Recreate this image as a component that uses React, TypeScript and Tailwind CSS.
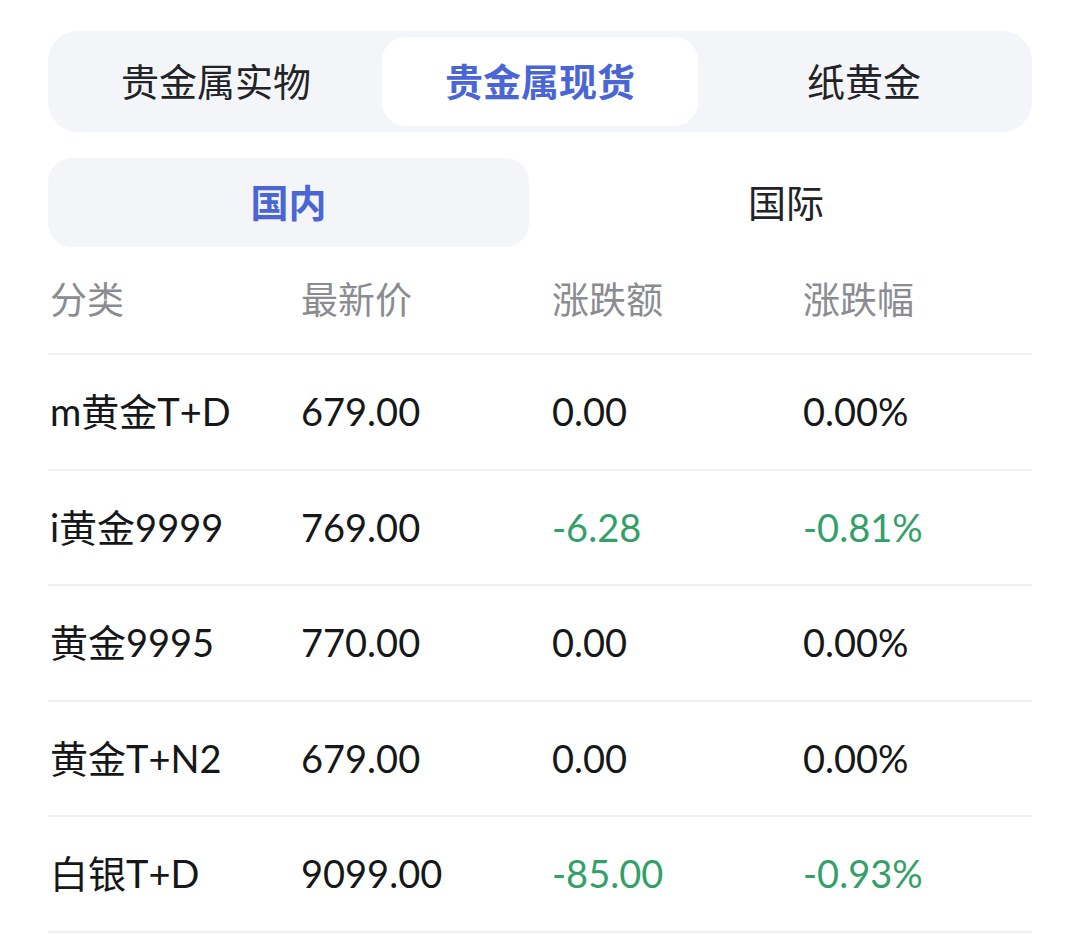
const topTabs = ["贵金属实物", "贵金属现货", "纸黄金"];
const subTabs = ["国内", "国际"];
const columns = ["分类", "最新价", "涨跌额", "涨跌幅"];

const rows = [
  { name: "m黄金T+D", price: "679.00", change: "0.00", pct: "0.00%", down: false },
  { name: "i黄金9999", price: "769.00", change: "-6.28", pct: "-0.81%", down: true },
  { name: "黄金9995", price: "770.00", change: "0.00", pct: "0.00%", down: false },
  { name: "黄金T+N2", price: "679.00", change: "0.00", pct: "0.00%", down: false },
  { name: "白银T+D", price: "9099.00", change: "-85.00", pct: "-0.93%", down: true },
];

const font = { fontFamily: "Lato, 'Noto Sans CJK SC', sans-serif" };

export default function App() {
  return (
    <div className="min-h-[952px] bg-white px-[48px] pt-[31px]" style={font}>
      {/* top segmented tabs */}
      <div className="grid h-[101px] grid-cols-3 rounded-[30px] bg-[#f4f5f9] p-[6px]">
        {topTabs.map((t, i) => (
          <div
            key={t}
            className={
              i === 1
                ? "mx-[4px] flex items-center justify-center rounded-[24px] bg-white text-[38px] font-bold text-[#4a66d5]"
                : "flex items-center justify-center text-[38px] text-[#222326]"
            }
          >
            {t}
          </div>
        ))}
      </div>

      {/* region tabs */}
      <div className="mt-[26px] grid h-[89px] grid-cols-2">
        {subTabs.map((t, i) => (
          <div
            key={t}
            className={
              i === 0
                ? "mr-[11px] flex items-center justify-center rounded-[24px] bg-[#f4f5f9] text-[38px] font-bold text-[#4a66d5]"
                : "flex items-center justify-center text-[38px] text-[#222326]"
            }
          >
            {t}
          </div>
        ))}
      </div>

      {/* table header */}
      <div className="grid h-[108px] grid-cols-[251px_251px_251px_1fr] items-center border-b-2 border-[#efeff1] pl-[2px]">
        {columns.map((c) => (
          <div key={c} className="text-[37px] text-[#8b8c90]">
            {c}
          </div>
        ))}
      </div>

      {rows.map((r) => (
        <div
          key={r.name}
          className="grid h-[115.5px] grid-cols-[251px_251px_251px_1fr] items-center border-b-2 border-[#efeff1] pl-[2px] text-[38px] text-[#161719]"
        >
          <div>{r.name}</div>
          <div>{r.price}</div>
          <div className={r.down ? "text-[#33a06a]" : ""}>{r.change}</div>
          <div className={r.down ? "text-[#33a06a]" : ""}>{r.pct}</div>
        </div>
      ))}
    </div>
  );
}
